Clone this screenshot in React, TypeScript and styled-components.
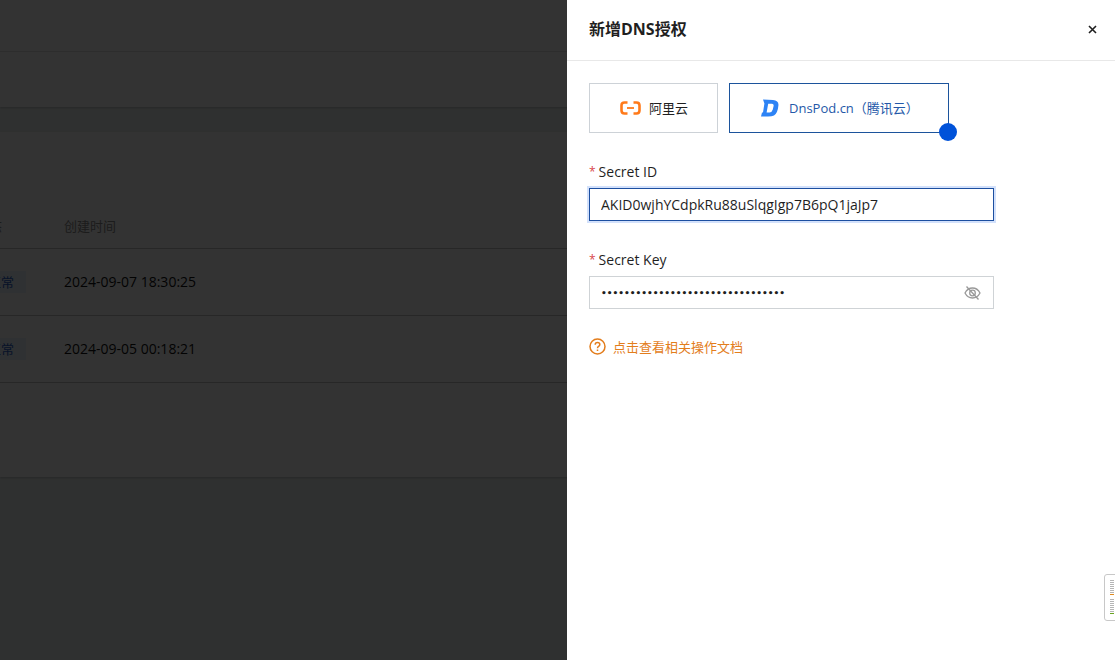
import React, { useState } from 'react';
import styled, { createGlobalStyle } from 'styled-components';

const GlobalStyle = createGlobalStyle`
  *, *::before, *::after { box-sizing: border-box; }
  body {
    margin: 0;
    font-family: "Open Sans", "Noto Sans CJK SC", sans-serif;
    font-size: 14px;
    line-height: 20px;
    color: #1f1f1f;
    background: #ebf0ef;
  }
`;

const Shell = styled.div`
  min-height: 100vh;
  overflow: hidden;
`;

const TopBar = styled.header`
  height: 52px;
  background: #fff;
  border-bottom: 1px solid #e4e4e4;
`;

const SubBar = styled.div`
  height: 55px;
  background: #fff;
  box-shadow: 0 1px 2px rgba(0, 0, 0, 0.2);
`;

const Card = styled.main`
  margin-top: 25px;
  padding: 72px 0 94px;
  background: #fff;
  box-shadow: 0 1px 2px rgba(0, 0, 0, 0.2);
`;

const Table = styled.table`
  width: calc(100% + 24px);
  margin-left: -24px;
  border-collapse: collapse;
  table-layout: fixed;
  text-align: left;
`;

const Th = styled.th<{ $width?: number }>`
  width: ${(p) => (p.$width ? `${p.$width}px` : 'auto')};
  height: 44px;
  padding: 0;
  font-size: 13px;
  font-weight: 400;
  color: #8c8c8c;
  border-bottom: 1px solid #c4c4c4;
`;

const Td = styled.td`
  height: 67px;
  padding: 0;
  color: #111;
  border-bottom: 1px solid #c4c4c4;
`;

const Tag = styled.span`
  display: inline-block;
  padding: 1px 12px;
  font-size: 13px;
  color: #1f5fc8;
  background: #eaf2fc;
`;

const Mask = styled.div`
  position: fixed;
  inset: 0;
  background: rgba(0, 0, 0, 0.8);
`;

const Drawer = styled.aside`
  position: fixed;
  top: 0;
  right: 0;
  bottom: 0;
  width: 548px;
  max-width: 100%;
  overflow: auto;
  background: #fff;
`;

const DrawerHead = styled.header`
  display: flex;
  align-items: center;
  justify-content: space-between;
  height: 61px;
  padding: 0 18px 2px 22px;
  border-bottom: 1px solid #e8e8e8;
`;

const Title = styled.h2`
  margin: 0;
  font-size: 16px;
  font-weight: 700;
`;

const IconButton = styled.button`
  display: flex;
  padding: 0;
  border: 0;
  background: none;
  color: inherit;
  cursor: pointer;
`;

const Form = styled.form`
  display: flex;
  flex-direction: column;
  align-items: flex-start;
  gap: 29px;
  padding: 22px;
`;

const Providers = styled.div`
  display: flex;
  gap: 11px;
`;

const Provider = styled.button<{ $active: boolean }>`
  position: relative;
  display: flex;
  align-items: center;
  gap: 8px;
  height: 50px;
  padding: 0 29px 0 30px;
  border: 1px solid ${(p) => (p.$active ? '#1c549c' : '#cdd2d7')};
  background: #fff;
  color: ${(p) => (p.$active ? '#2458a8' : '#1f1f1f')};
  font: inherit;
  font-size: 13px;
  cursor: pointer;
`;

const SelectedDot = styled.span`
  position: absolute;
  right: -9px;
  bottom: -9px;
  width: 18px;
  height: 18px;
  border-radius: 50%;
  background: #0052d9;
`;

const Field = styled.div`
  display: flex;
  flex-direction: column;
  gap: 6px;
  width: 405px;
  max-width: 100%;
`;

const Label = styled.label`
  display: flex;
  gap: 3px;
`;

const Required = styled.span`
  font-size: 12px;
  color: #d9484c;
`;

const InputBox = styled.div<{ $focused?: boolean }>`
  display: flex;
  align-items: center;
  height: 33px;
  padding: 0 12px 0 11px;
  border: 1px solid ${(p) => (p.$focused ? '#1c4fa0' : '#cfd3d6')};
  box-shadow: ${(p) => (p.$focused ? '0 0 0 2px #d3e1fb' : 'none')};
  color: #999;
`;

const Input = styled.input`
  flex: 1;
  min-width: 0;
  padding: 0;
  border: 0;
  outline: 0;
  background: none;
  color: #1f1f1f;
  font: inherit;

  &[type='password'] {
    font-family: "DejaVu Sans", sans-serif;
    font-size: 9px;
    font-weight: 700;
  }
`;

const HelpLink = styled.a`
  display: flex;
  align-items: center;
  gap: 7px;
  font-size: 13px;
  line-height: 16px;
  color: #e37d1c;
  text-decoration: none;
`;

const SideWidget = styled.div`
  position: fixed;
  right: -1px;
  bottom: 39px;
  display: flex;
  flex-direction: column;
  gap: 4px;
  padding: 5px 1px 6px 5px;
  border: 1px solid #c8c8c8;
  border-radius: 3px 0 0 3px;
  background: #fff;
`;

const Meter = styled.div<{ $color: string }>`
  width: 4px;
  height: 15px;
  background: repeating-linear-gradient(#b5b5b5 0 1px, #fff 1px 2px);
  border-bottom: 1px solid ${(p) => p.$color};
`;

const rows = ['2024-09-07 18:30:25', '2024-09-05 00:18:21'];

const CloseIcon = () => (
  <svg width="9" height="9" viewBox="0 0 9 9" stroke="currentColor" strokeWidth="1.6" aria-hidden="true">
    <path d="M1 1l7 7M8 1L1 8" />
  </svg>
);

const AliyunIcon = () => (
  <svg width="21" height="14" viewBox="0 0 21 14" fill="none" stroke="#ff7a1a" aria-hidden="true">
    <path d="M7.5 1.5H4.5Q1.5 1.5 1.5 4.5V9.5Q1.5 12.5 4.5 12.5H7.5" strokeWidth="2.6" />
    <path d="M13.5 1.5H16.5Q19.5 1.5 19.5 4.5V9.5Q19.5 12.5 16.5 12.5H13.5" strokeWidth="2.6" />
    <path d="M7 7H14" strokeWidth="1.8" />
  </svg>
);

const DnsPodIcon = () => (
  <svg width="21" height="18" viewBox="0 0 21 18" aria-hidden="true">
    <path
      fill="#2d83f5"
      fillRule="evenodd"
      d="M3 0.4L13 1Q19 1.6 18.4 6.5Q17.8 14 14 16.5Q12 17.6 8 17.6H1L2 13.4H3L4.4 4.5ZM8.2 4.8L6.6 13.4H9.5Q12 13.4 12.8 10.5L13.6 6.9Q13.9 4.8 12 4.8Z"
    />
  </svg>
);

const EyeOffIcon = () => (
  <svg width="17" height="14" viewBox="0 0 17 14" fill="none" stroke="currentColor" strokeWidth="1.3" aria-hidden="true">
    <path d="M1 7Q3.6 2 8.5 2T16 7Q13.4 12 8.5 12T1 7Z" />
    <circle cx="8.5" cy="7" r="2.8" />
    <path d="M2.5 0.5L14.5 13.5" />
  </svg>
);

const HelpIcon = () => (
  <svg width="17" height="17" viewBox="0 0 17 17" fill="none" stroke="currentColor" strokeWidth="1.5" aria-hidden="true">
    <circle cx="8.5" cy="8.5" r="7.5" />
    <path d="M6.2 6.8Q6.2 4.6 8.5 4.6T10.8 6.6Q10.8 7.7 9.6 8.4Q8.5 9 8.5 10.3M8.5 11.5V13" />
  </svg>
);

export default function App() {
  const [provider, setProvider] = useState('dnspod');
  const [secretId, setSecretId] = useState('AKID0wjhYCdpkRu88uSlqgIgp7B6pQ1jaJp7');
  const [secretKey, setSecretKey] = useState('x'.repeat(32));
  const [visible, setVisible] = useState(false);

  return (
    <>
      <GlobalStyle />
      <Shell>
        <TopBar />
        <SubBar />
        <Card>
          <Table>
            <thead>
              <tr>
                <Th $width={88}>状态</Th>
                <Th>创建时间</Th>
              </tr>
            </thead>
            <tbody>
              {rows.map((time) => (
                <tr key={time}>
                  <Td><Tag>正常</Tag></Td>
                  <Td>{time}</Td>
                </tr>
              ))}
            </tbody>
          </Table>
        </Card>
      </Shell>
      <Mask />
      <Drawer role="dialog" aria-labelledby="drawer-title">
        <DrawerHead>
          <Title id="drawer-title">新增DNS授权</Title>
          <IconButton type="button" aria-label="关闭"><CloseIcon /></IconButton>
        </DrawerHead>
        <Form>
          <Providers>
            <Provider type="button" $active={provider === 'aliyun'} onClick={() => setProvider('aliyun')}>
              <AliyunIcon />
              阿里云
              {provider === 'aliyun' && <SelectedDot />}
            </Provider>
            <Provider type="button" $active={provider === 'dnspod'} onClick={() => setProvider('dnspod')}>
              <DnsPodIcon />
              DnsPod.cn（腾讯云）
              {provider === 'dnspod' && <SelectedDot />}
            </Provider>
          </Providers>
          <Field>
            <Label htmlFor="secret-id"><Required>*</Required>Secret ID</Label>
            <InputBox $focused>
              <Input id="secret-id" value={secretId} onChange={(e) => setSecretId(e.target.value)} />
            </InputBox>
          </Field>
          <Field>
            <Label htmlFor="secret-key"><Required>*</Required>Secret Key</Label>
            <InputBox>
              <Input
                id="secret-key"
                type={visible ? 'text' : 'password'}
                value={secretKey}
                onChange={(e) => setSecretKey(e.target.value)}
              />
              <IconButton type="button" aria-label="显示密钥" onClick={() => setVisible(!visible)}>
                <EyeOffIcon />
              </IconButton>
            </InputBox>
          </Field>
          <HelpLink href="#docs"><HelpIcon />点击查看相关操作文档</HelpLink>
        </Form>
      </Drawer>
      <SideWidget>
        <Meter $color="#e08a1e" />
        <Meter $color="#6aa520" />
      </SideWidget>
    </>
  );
}
